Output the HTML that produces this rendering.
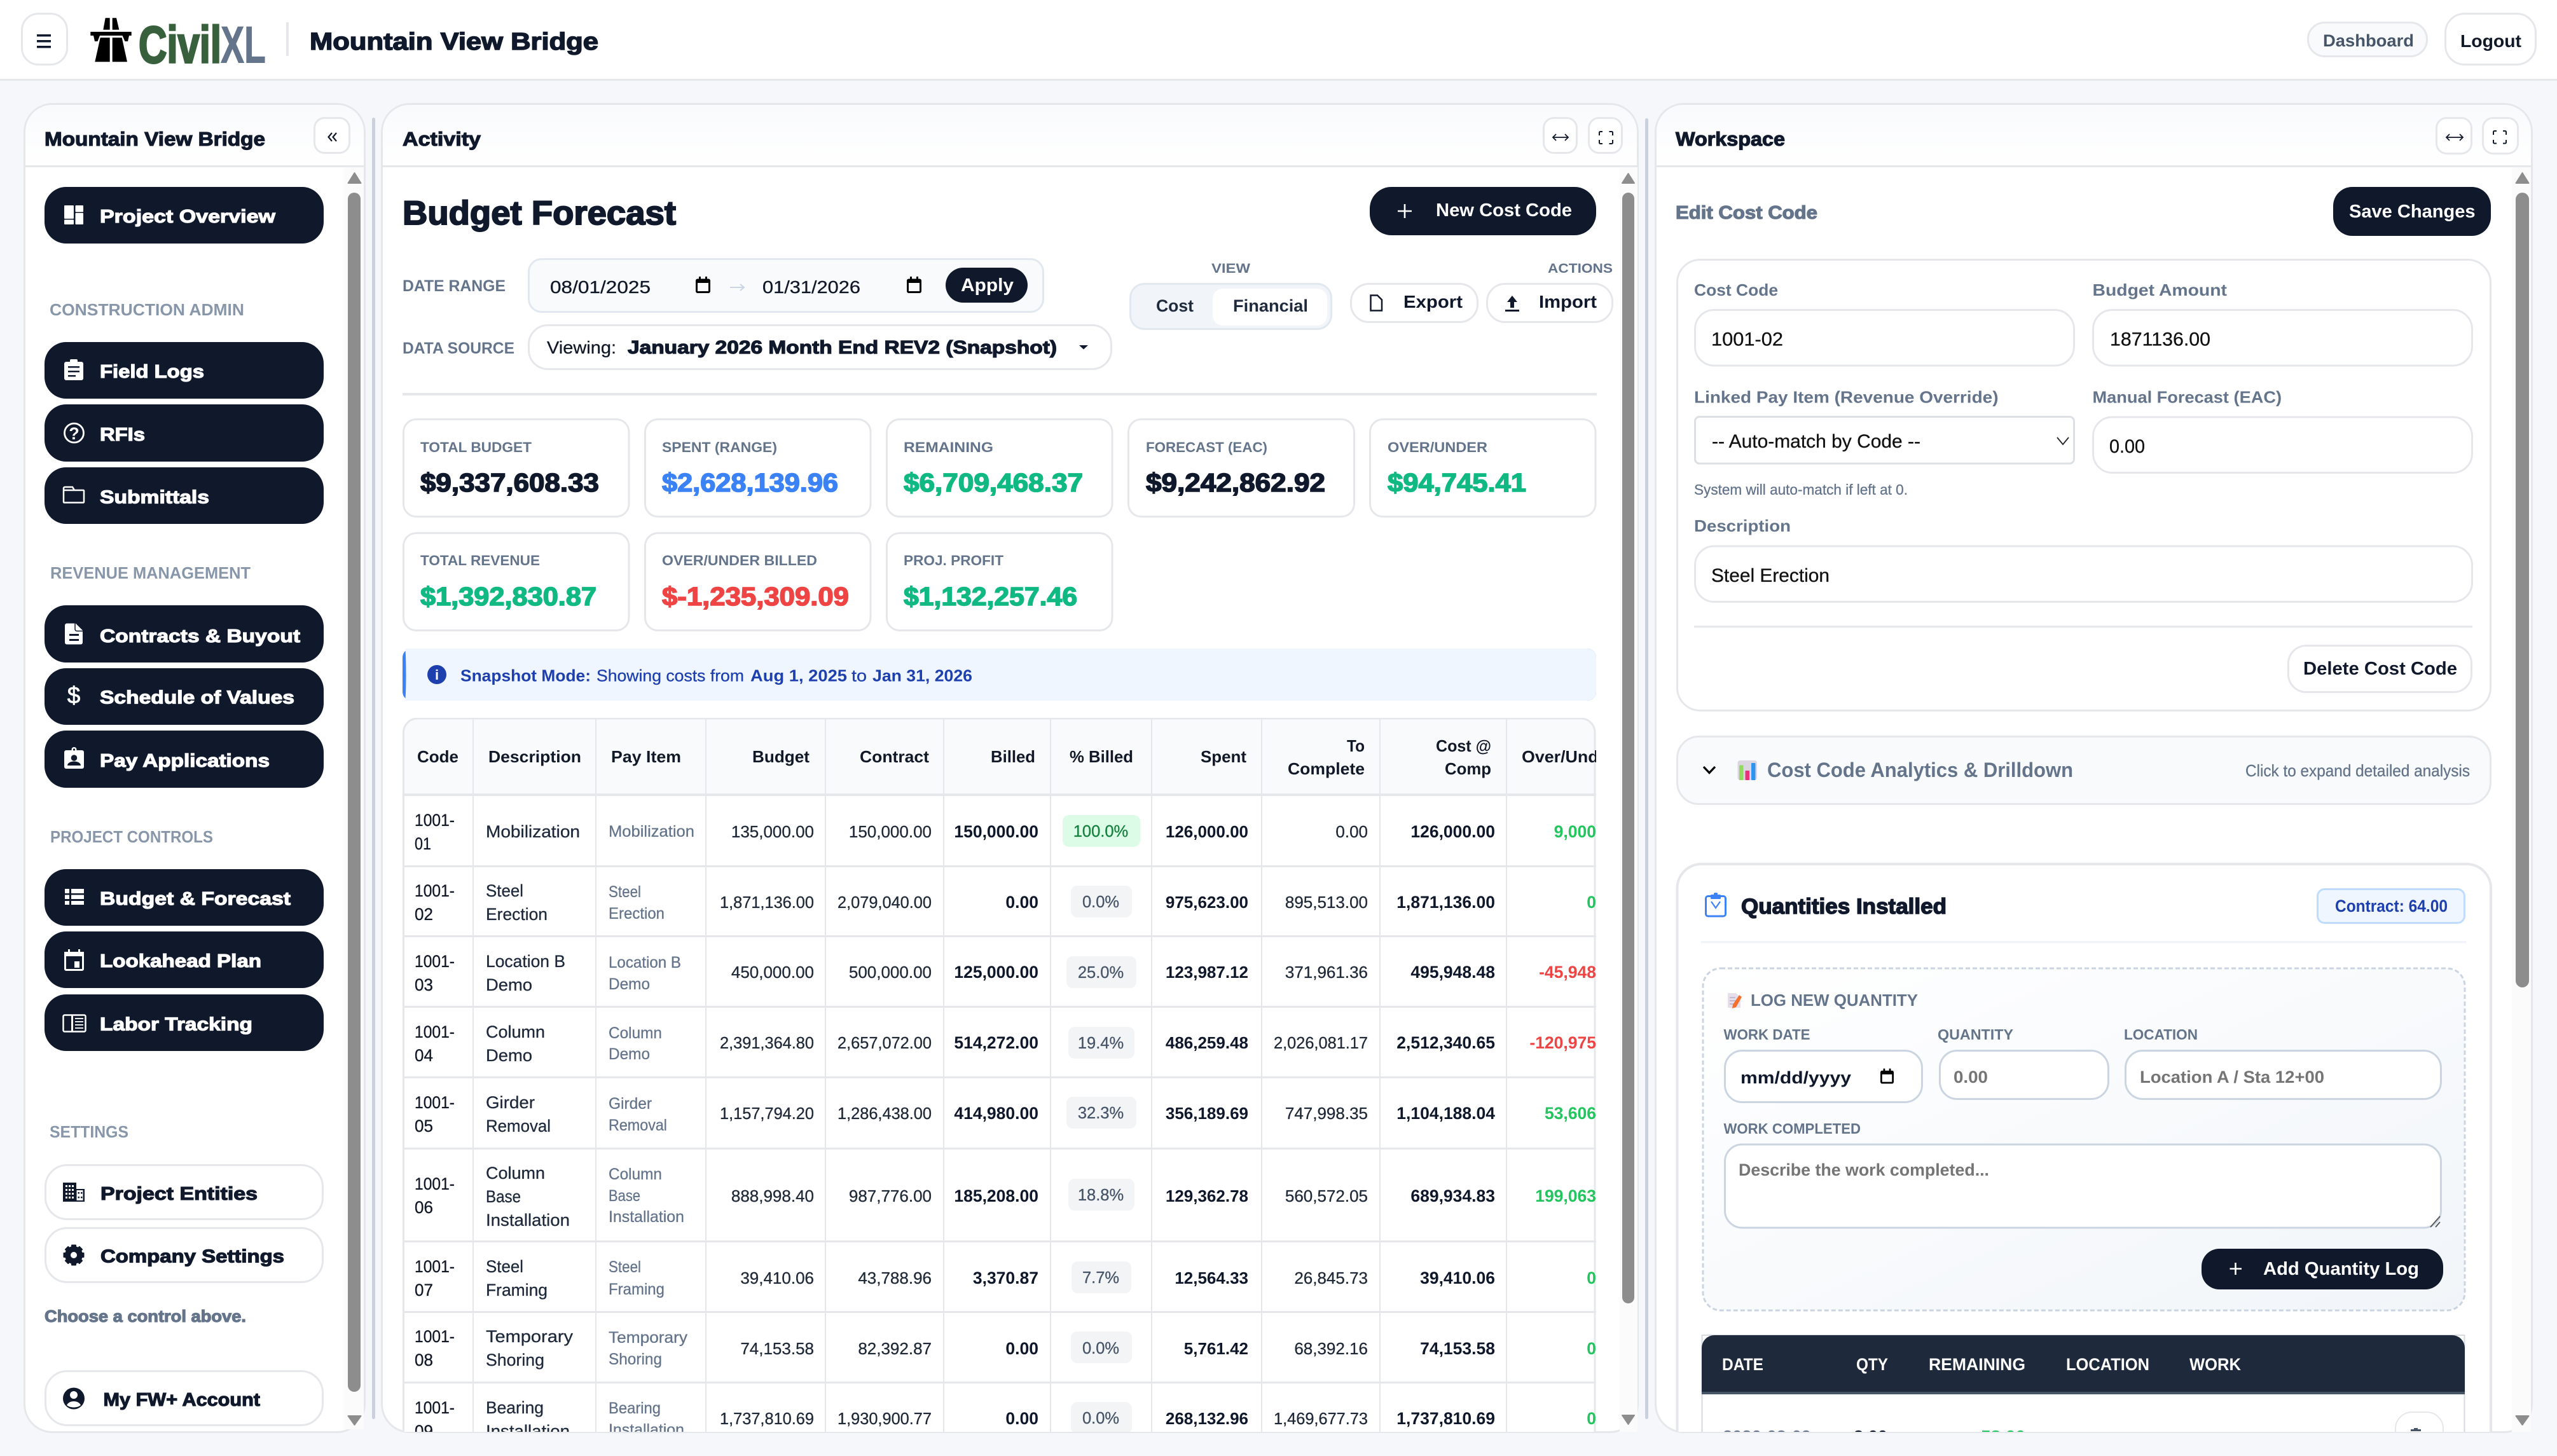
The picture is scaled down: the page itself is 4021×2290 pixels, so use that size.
<!DOCTYPE html>
<html lang="en"><head><meta charset="utf-8"><title>Mountain View Bridge - Budget Forecast</title>
<style>
html,body{margin:0;padding:0;background:#f5f7fb;width:4021px;height:2290px;overflow:hidden}
svg{display:block}
text{font-family:"Liberation Sans",sans-serif;fill:currentColor;white-space:pre}
.b{font-weight:700}
.x{font-weight:700;stroke:currentColor;stroke-width:1.2px}
.s{stroke:currentColor;stroke-width:.3px}
.l{stroke:#e5e7eb;stroke-width:3;fill:#fff}
</style></head><body>
<svg xmlns="http://www.w3.org/2000/svg" width="4021" height="2290" viewBox="0 0 4021 2290">
<defs>
<clipPath id="mid"><rect x="600" y="263" width="1977" height="1989"/></clipPath>
<clipPath id="rgt"><rect x="2602" y="263" width="1381" height="1989"/></clipPath>
<clipPath id="tbl"><rect x="633" y="1129" width="1877" height="1123"/></clipPath>
<linearGradient id="hd" x1="0" y1="0" x2="0" y2="1"><stop offset="0" stop-color="#f9fafc"/><stop offset="1" stop-color="#ffffff"/></linearGradient>
<linearGradient id="dash" x1="0" y1="0" x2="1" y2="1"><stop offset="0" stop-color="#ffffff"/><stop offset="1" stop-color="#f1f5f9"/></linearGradient>
<symbol id="cal" viewBox="0 0 23 26" overflow="visible"><rect x="1.5" y="5" width="20" height="19.5" rx="1.5" fill="none" stroke="currentColor" stroke-width="3"/><rect x="1" y="4" width="21" height="6" fill="currentColor"/><rect x="5" y="0" width="3" height="6" fill="currentColor"/><rect x="15" y="0" width="3" height="6" fill="currentColor"/></symbol>
</defs>
<rect width="4021" height="2290" fill="#f5f7fb"/>

<!-- TOP BAR -->
<rect width="4021" height="124" fill="#fff"/>
<rect y="124" width="4021" height="3" fill="#e5e7eb"/>
<rect x="34.500" y="21.500" width="71" height="80" rx="26" fill="#fff" stroke="#e5e7eb" stroke-width="3"/>
<g fill="#10182c"><rect x="58" y="54" width="22" height="3.500"/><rect x="58" y="63" width="22" height="3.500"/><rect x="58" y="72" width="22" height="3.500"/></g>
<g fill="#000">
<polygon points="165.700,28.300 172.700,28.300 172.700,46.700 162.300,46.700"/>
<polygon points="176.700,28.300 183,28.300 187.300,46.700 176.700,46.700"/>
<rect x="142.300" y="50" width="64.400" height="6"/>
<polygon points="147,56 157,56 153.500,65 149,65"/><polygon points="192.500,56 203,56 201,65 196.500,65"/>
<polygon points="157.700,59.300 172.700,59.300 172.700,97.300 149.300,97.300"/>
<polygon points="176.700,59.300 191.700,59.300 200,97.300 176.700,97.300"/>
</g>
<text x="218" y="98.500" font-size="82" textLength="130" lengthAdjust="spacingAndGlyphs" class="b" color="#38603c" style="stroke:currentColor;stroke-width:3px">Civil</text>
<text x="347" y="98.500" font-size="82" textLength="71" lengthAdjust="spacingAndGlyphs" class="b" color="#64748b" style="stroke:currentColor;stroke-width:1px">XL</text>
<rect x="450" y="35" width="4" height="53" fill="#e5e7eb"/>
<text x="487" y="78" font-size="38" textLength="454" lengthAdjust="spacingAndGlyphs" class="x" color="#10182c" style="stroke-width:1.5px">Mountain View Bridge</text>
<rect x="3629.500" y="35.500" width="187" height="53" rx="26" fill="#f8fafc" stroke="#e5e7eb" stroke-width="3"/>
<text x="3653" y="73" font-size="27" textLength="143" lengthAdjust="spacingAndGlyphs" class="b" color="#475569">Dashboard</text>
<rect x="3845.500" y="21.500" width="142" height="80" rx="30" fill="#fff" stroke="#e5e7eb" stroke-width="3"/>
<text x="3869" y="74" font-size="28" textLength="96" lengthAdjust="spacingAndGlyphs" class="b" color="#111827">Logout</text>

<!-- GUTTERS -->
<rect x="585" y="185" width="5" height="2047" rx="2.500" fill="#c9d1de"/>
<rect x="2587" y="186" width="5" height="2046" rx="2.500" fill="#c9d1de"/>

<!-- LEFT PANEL -->
<rect x="38.500" y="163.500" width="535" height="2089" rx="44" class="l"/>
<path d="M40 261V207a42 42 0 0 1 42-42H530a42 42 0 0 1 42 42V261z" fill="url(#hd)"/>
<rect x="38" y="260" width="536" height="3" fill="#e5e7eb"/>
<text x="70" y="229" font-size="31" textLength="347" lengthAdjust="spacingAndGlyphs" class="x" color="#10182c">Mountain View Bridge</text>
<rect x="494.500" y="185.500" width="55" height="55" rx="16" fill="#fff" stroke="#e5e7eb" stroke-width="3"/>
<path d="M522 209l-5.500 6.500 5.500 6.500M529 209l-5.500 6.500 5.500 6.500" fill="none" stroke="#10182c" stroke-width="2.200"/>
<rect x="541" y="263" width="31" height="1985" fill="#fbfbfb"/>
<rect x="547" y="303" width="20" height="1886" rx="10" fill="#8d8d8d"/>
<path d="M557.500 272l10 16h-20z" fill="#8d8d8d" stroke="#8d8d8d" stroke-width="2" stroke-linejoin="round"/>
<path d="M557.500 2241l10-14h-20z" fill="#8d8d8d" stroke="#8d8d8d" stroke-width="2" stroke-linejoin="round"/>

<g fill="#10182c">
<rect x="70" y="294" width="439" height="89" rx="34"/>
<rect x="70" y="538" width="439" height="89" rx="34"/>
<rect x="70" y="636" width="439" height="90" rx="34"/>
<rect x="70" y="735" width="439" height="89" rx="34"/>
<rect x="70" y="952" width="439" height="90" rx="34"/>
<rect x="70" y="1051" width="439" height="89" rx="34"/>
<rect x="70" y="1149" width="439" height="90" rx="34"/>
<rect x="70" y="1367" width="439" height="89" rx="34"/>
<rect x="70" y="1465" width="439" height="89" rx="34"/>
<rect x="70" y="1564" width="439" height="89" rx="34"/>
</g>
<g fill="#fff" stroke="#e5e7eb" stroke-width="3">
<rect x="71.500" y="1832.500" width="436" height="85" rx="34"/>
<rect x="71.500" y="1931.500" width="436" height="85" rx="34"/>
<rect x="71.500" y="2156.500" width="436" height="85" rx="34"/>
</g>

<g color="#8896a9" class="b" font-size="26">
<text x="78" y="496" textLength="306" lengthAdjust="spacingAndGlyphs">CONSTRUCTION ADMIN</text>
<text x="79" y="910" textLength="315" lengthAdjust="spacingAndGlyphs">REVENUE MANAGEMENT</text>
<text x="79" y="1325" textLength="256" lengthAdjust="spacingAndGlyphs">PROJECT CONTROLS</text>
<text x="78" y="1789" textLength="124" lengthAdjust="spacingAndGlyphs">SETTINGS</text>
</g>

<g color="#fff" class="x" font-size="29">
<text x="157" y="350" textLength="276" lengthAdjust="spacingAndGlyphs">Project Overview</text>
<text x="157" y="594" textLength="164" lengthAdjust="spacingAndGlyphs">Field Logs</text>
<text x="157" y="693" textLength="71" lengthAdjust="spacingAndGlyphs">RFIs</text>
<text x="157" y="791.500" textLength="172" lengthAdjust="spacingAndGlyphs">Submittals</text>
<text x="157" y="1010" textLength="315" lengthAdjust="spacingAndGlyphs">Contracts &amp; Buyout</text>
<text x="157" y="1106.500" textLength="306" lengthAdjust="spacingAndGlyphs">Schedule of Values</text>
<text x="157" y="1206" textLength="267" lengthAdjust="spacingAndGlyphs">Pay Applications</text>
<text x="157" y="1423" textLength="300" lengthAdjust="spacingAndGlyphs">Budget &amp; Forecast</text>
<text x="157" y="1521" textLength="254" lengthAdjust="spacingAndGlyphs">Lookahead Plan</text>
<text x="157" y="1620.500" textLength="240" lengthAdjust="spacingAndGlyphs">Labor Tracking</text>
</g>
<g color="#10182c" class="x" font-size="29">
<text x="158" y="1887" textLength="247" lengthAdjust="spacingAndGlyphs">Project Entities</text>
<text x="158" y="1985.500" textLength="289" lengthAdjust="spacingAndGlyphs">Company Settings</text>
<text x="162.500" y="2211" textLength="246.500" lengthAdjust="spacingAndGlyphs">My FW+ Account</text>
</g>
<text x="70" y="2079" font-size="26" textLength="317" lengthAdjust="spacingAndGlyphs" class="x" color="#64748b">Choose a control above.</text>

<!-- sidebar icons -->
<g fill="#fff">
<rect x="101" y="323" width="15" height="21" rx="1"/><rect x="118.500" y="323" width="12.500" height="10.500" rx="1"/><rect x="101" y="345.500" width="15" height="7.500" rx="1"/><rect x="118.500" y="335" width="12.500" height="18" rx="1"/>
<rect x="101" y="569" width="30" height="29" rx="3"/><rect x="110" y="565" width="12" height="6" rx="2"/>
<rect x="107" y="576" width="18" height="2.500" fill="#10182c"/><rect x="107" y="583" width="18" height="2.500" fill="#10182c"/><rect x="107" y="590" width="12" height="2.500" fill="#10182c"/>
</g>
<circle cx="116.500" cy="681" r="15" fill="none" stroke="#fff" stroke-width="2.800"/>
<text x="116.500" y="691" font-size="27" text-anchor="middle" class="b" color="#fff">?</text>
<path d="M101 790.500h30a1 1 0 0 0 1-1V772a1 1 0 0 0-1-1H117l-3-5H102a2 2 0 0 0-2 2v21.500a1 1 0 0 0 1 1zM100 771h18" fill="none" stroke="#fff" stroke-width="2.500"/>
<path d="M105 980.500h14l11 11v19a3 3 0 0 1-3 3H105a3 3 0 0 1-3-3v-27a3 3 0 0 1 3-3z" fill="#fff"/>
<path d="M118 980.500v9a3 3 0 0 0 3 3h9" fill="none" stroke="#10182c" stroke-width="1.500"/>
<rect x="109" y="997" width="15" height="3" fill="#10182c"/><rect x="109" y="1005" width="15" height="3" fill="#10182c"/>
<text x="116" y="1106" font-size="37" text-anchor="middle" color="#fff" style="stroke:currentColor;stroke-width:.7px">$</text>
<rect x="101" y="1180" width="31" height="29" rx="3" fill="#fff"/><circle cx="116.500" cy="1179" r="4" fill="#fff"/><circle cx="116.500" cy="1179" r="1.600" fill="#10182c"/>
<circle cx="116.500" cy="1192" r="4.800" fill="#10182c"/><path d="M106 1204c0-4 5-6.500 10.500-6.500s10.500 2.500 10.500 6.500z" fill="#10182c"/>
<g fill="#fff">
<rect x="102" y="1398" width="7" height="7"/><rect x="112" y="1398" width="20" height="7"/><rect x="102" y="1407.500" width="7" height="6.500"/><rect x="112" y="1407.500" width="20" height="6.500"/><rect x="102" y="1417" width="7" height="6"/><rect x="112" y="1417" width="20" height="6"/>
<rect x="101" y="1497" width="31" height="7"/><rect x="107" y="1493" width="3" height="6"/><rect x="123" y="1493" width="3" height="6"/><rect x="117" y="1512" width="8" height="10"/>
</g>
<rect x="102.500" y="1498.500" width="28" height="27" rx="1.500" fill="none" stroke="#fff" stroke-width="3"/>
<rect x="99.500" y="1596.500" width="35" height="26" rx="2" fill="none" stroke="#fff" stroke-width="2.500"/>
<rect x="112" y="1597" width="3" height="25" fill="#fff"/>
<g fill="#fff"><rect x="118" y="1601" width="13" height="1.800"/><rect x="118" y="1606" width="13" height="1.800"/><rect x="118" y="1611" width="13" height="1.800"/><rect x="118" y="1616" width="13" height="1.800"/></g>
<path d="M99 1860h21v10h13v20H99z" fill="#10182c"/>
<g fill="#fff"><rect x="103" y="1864" width="3" height="3"/><rect x="108" y="1864" width="3" height="3"/><rect x="113" y="1864" width="3" height="3"/><rect x="103" y="1870" width="3" height="3"/><rect x="108" y="1870" width="3" height="3"/><rect x="113" y="1870" width="3" height="3"/><rect x="103" y="1876" width="3" height="3"/><rect x="108" y="1876" width="3" height="3"/><rect x="113" y="1876" width="3" height="3"/><rect x="103" y="1882" width="3" height="3"/><rect x="108" y="1882" width="3" height="3"/><rect x="113" y="1882" width="3" height="3"/><rect x="120.500" y="1872" width="10" height="16"/></g>
<g fill="#10182c"><rect x="122.500" y="1875" width="2.500" height="2.500"/><rect x="127" y="1875" width="2.500" height="2.500"/><rect x="122.500" y="1882" width="2.500" height="2.500"/><rect x="127" y="1882" width="2.500" height="2.500"/></g>
<g transform="translate(116 1974)" fill="#10182c">
<circle r="9.500" fill="none" stroke="#10182c" stroke-width="9"/>
<rect x="-4" y="-16.500" width="8" height="6" rx="1"/><rect x="-4" y="-16.500" width="8" height="6" rx="1" transform="rotate(45)"/><rect x="-4" y="-16.500" width="8" height="6" rx="1" transform="rotate(90)"/><rect x="-4" y="-16.500" width="8" height="6" rx="1" transform="rotate(135)"/><rect x="-4" y="-16.500" width="8" height="6" rx="1" transform="rotate(180)"/><rect x="-4" y="-16.500" width="8" height="6" rx="1" transform="rotate(225)"/><rect x="-4" y="-16.500" width="8" height="6" rx="1" transform="rotate(270)"/><rect x="-4" y="-16.500" width="8" height="6" rx="1" transform="rotate(315)"/>
</g>
<circle cx="116" cy="2199.500" r="17" fill="#10182c"/><circle cx="116" cy="2194" r="6" fill="#fff"/><path d="M105 2210c2-4 6-6 11-6s9 2 11 6c-3 2.500-7 3.500-11 3.500s-8-1-11-3.500z" fill="#fff"/>

<!-- MIDDLE PANEL -->
<rect x="600.500" y="163.500" width="1975" height="2089" rx="44" class="l"/>
<path d="M602 261V207a42 42 0 0 1 42-42H2532a42 42 0 0 1 42 42V261z" fill="url(#hd)"/>
<rect x="600" y="260" width="1976" height="3" fill="#e5e7eb"/>
<text x="633" y="229" font-size="31" textLength="123" lengthAdjust="spacingAndGlyphs" class="x" color="#10182c">Activity</text>
<rect x="2427.500" y="185.500" width="52" height="55" rx="16" fill="#fff" stroke="#e5e7eb" stroke-width="3"/>
<rect x="2498.500" y="185.500" width="52" height="55" rx="16" fill="#fff" stroke="#e5e7eb" stroke-width="3"/>
<path d="M2442.500 216h23M2447 211l-5 5 5 5M2461 211l5 5-5 5" fill="none" stroke="#10182c" stroke-width="1.800"/>
<path d="M2515 213v-4.500a1.500 1.500 0 0 1 1.500-1.500H2520M2530.500 207h4a1.500 1.500 0 0 1 1.500 1.500V213M2536 220v4.500a1.500 1.500 0 0 1-1.500 1.500H2530.500M2520 226h-3.500a1.500 1.500 0 0 1-1.500-1.500V220" fill="none" stroke="#10182c" stroke-width="2"/>

<g clip-path="url(#mid)">
<rect x="2547" y="263" width="28" height="1990" fill="#fbfbfb"/>
<rect x="2551" y="303" width="19" height="1747" rx="9.500" fill="#8d8d8d"/>
<path d="M2560.500 273l9.500 15h-19z" fill="#8d8d8d" stroke="#8d8d8d" stroke-width="2" stroke-linejoin="round"/>
<path d="M2560.500 2240l9.500-14h-19z" fill="#8d8d8d" stroke="#8d8d8d" stroke-width="2" stroke-linejoin="round"/>

<text x="633" y="353" font-size="53" textLength="430" lengthAdjust="spacingAndGlyphs" class="x" color="#10182c" style="stroke-width:2px">Budget Forecast</text>
<rect x="2154" y="294" width="356" height="76" rx="34" fill="#10182c"/>
<path d="M2198 332h22M2209 321v22" stroke="#fff" stroke-width="2.600"/>
<text x="2258" y="340" font-size="29" textLength="214" lengthAdjust="spacingAndGlyphs" class="b" color="#fff">New Cost Code</text>

<g class="b" color="#64748b" font-size="25">
<text x="633" y="458" textLength="162" lengthAdjust="spacingAndGlyphs">DATE RANGE</text>
<text x="633" y="556" textLength="176" lengthAdjust="spacingAndGlyphs">DATA SOURCE</text>
</g>
<rect x="831.500" y="407.500" width="809" height="83" rx="20" fill="#f8fafc" stroke="#e2e8f0" stroke-width="3"/>
<text x="865" y="461" font-size="28" textLength="158" lengthAdjust="spacingAndGlyphs" color="#111827" class="s">08/01/2025</text>
<use href="#cal" x="1094" y="435" width="23" height="26" color="#000"/>
<path d="M1148 452h22M1164 447l6 5-6 5" fill="none" stroke="#cbd5e1" stroke-width="2"/>
<text x="1199" y="461" font-size="28" textLength="154" lengthAdjust="spacingAndGlyphs" color="#111827" class="s">01/31/2026</text>
<use href="#cal" x="1426" y="435" width="23" height="26" color="#000"/>
<rect x="1487" y="421" width="129" height="55" rx="27.500" fill="#10182c"/>
<text x="1511" y="458" font-size="29" textLength="83" lengthAdjust="spacingAndGlyphs" class="b" color="#fff">Apply</text>

<rect x="831.500" y="511.500" width="916" height="69" rx="30" fill="#fff" stroke="#e5e7eb" stroke-width="3"/>
<text x="860" y="556" font-size="28" textLength="109" lengthAdjust="spacingAndGlyphs" color="#111827" class="s">Viewing:</text>
<text x="987" y="556" font-size="29" textLength="675" lengthAdjust="spacingAndGlyphs" class="x" color="#10182c">January 2026 Month End REV2 (Snapshot)</text>
<path d="M1697 543h14l-7 6.500z" fill="#10182c"/>

<g class="b" color="#64748b" font-size="21">
<text x="1905" y="429" textLength="61" lengthAdjust="spacingAndGlyphs">VIEW</text>
<text x="2434" y="429" textLength="102" lengthAdjust="spacingAndGlyphs">ACTIONS</text>
</g>
<rect x="1777.500" y="446.500" width="316" height="71" rx="22" fill="#f1f5f9" stroke="#e2e8f0" stroke-width="3"/>
<rect x="1907" y="454" width="180" height="58" rx="16" fill="#fff"/>
<g class="b" color="#1f2a3d" font-size="27">
<text x="1818" y="490" textLength="59" lengthAdjust="spacingAndGlyphs">Cost</text>
<text x="1939" y="490" textLength="118" lengthAdjust="spacingAndGlyphs">Financial</text>
</g>
<rect x="2124.500" y="446.500" width="199" height="60" rx="28" fill="#fff" stroke="#e5e7eb" stroke-width="3"/>
<rect x="2338.500" y="446.500" width="197" height="60" rx="28" fill="#fff" stroke="#e5e7eb" stroke-width="3"/>
<path d="M2155.500 464.500h10.500l7 7v17h-17.500z" fill="none" stroke="#10182c" stroke-width="2.500"/>
<path d="M2378 465l8 10h-5v9h-6v-9h-5zM2367 487h22v3h-22z" fill="#10182c"/>
<g class="b" color="#10182c" font-size="28">
<text x="2207" y="484" textLength="93" lengthAdjust="spacingAndGlyphs">Export</text>
<text x="2420" y="484" textLength="91" lengthAdjust="spacingAndGlyphs">Import</text>
</g>
<rect x="633" y="618" width="1878" height="4" fill="#e5e7eb"/>

<!-- KPI cards -->
<g fill="#fff" stroke="#e5e7eb" stroke-width="3">
<rect x="634.500" y="659.500" width="354.500" height="153" rx="20"/><rect x="1014.500" y="659.500" width="354.500" height="153" rx="20"/><rect x="1394.500" y="659.500" width="354.500" height="153" rx="20"/><rect x="1774.500" y="659.500" width="355" height="153" rx="20"/><rect x="2154.500" y="659.500" width="354.500" height="153" rx="20"/>
<rect x="634.500" y="838.500" width="354.500" height="153" rx="20"/><rect x="1014.500" y="838.500" width="354.500" height="153" rx="20"/><rect x="1394.500" y="838.500" width="354.500" height="153" rx="20"/>
</g>
<g class="b" color="#64748b" font-size="22">
<text x="661" y="711" textLength="175" lengthAdjust="spacingAndGlyphs">TOTAL BUDGET</text>
<text x="1041" y="711" textLength="181" lengthAdjust="spacingAndGlyphs">SPENT (RANGE)</text>
<text x="1421" y="711" textLength="141" lengthAdjust="spacingAndGlyphs">REMAINING</text>
<text x="1802" y="711" textLength="191" lengthAdjust="spacingAndGlyphs">FORECAST (EAC)</text>
<text x="2182" y="711" textLength="157" lengthAdjust="spacingAndGlyphs">OVER/UNDER</text>
<text x="661" y="889" textLength="188" lengthAdjust="spacingAndGlyphs">TOTAL REVENUE</text>
<text x="1041" y="889" textLength="244" lengthAdjust="spacingAndGlyphs">OVER/UNDER BILLED</text>
<text x="1421" y="889" textLength="157" lengthAdjust="spacingAndGlyphs">PROJ. PROFIT</text>
</g>
<g class="x" font-size="41" style="stroke-width:1.600px">
<text x="661" y="773" textLength="281" lengthAdjust="spacingAndGlyphs" color="#10182c">$9,337,608.33</text>
<text x="1041" y="773" textLength="277" lengthAdjust="spacingAndGlyphs" color="#3b82f6">$2,628,139.96</text>
<text x="1421" y="773" textLength="282" lengthAdjust="spacingAndGlyphs" color="#10b981">$6,709,468.37</text>
<text x="1802" y="773" textLength="282" lengthAdjust="spacingAndGlyphs" color="#10182c">$9,242,862.92</text>
<text x="2182" y="773" textLength="218" lengthAdjust="spacingAndGlyphs" color="#10b981">$94,745.41</text>
<text x="661" y="952" textLength="277" lengthAdjust="spacingAndGlyphs" color="#10b981">$1,392,830.87</text>
<text x="1041" y="952" textLength="294" lengthAdjust="spacingAndGlyphs" color="#ef4444">$-1,235,309.09</text>
<text x="1421" y="952" textLength="273" lengthAdjust="spacingAndGlyphs" color="#10b981">$1,132,257.46</text>
</g>

<!-- Banner -->
<rect x="633" y="1020" width="1877" height="82" rx="14" fill="#3b82f6"/>
<path d="M637 1020H2496a14 14 0 0 1 14 14v54a14 14 0 0 1-14 14H637c2-6 2-76 0-82z" fill="#eff6ff"/>
<circle cx="687" cy="1061" r="15" fill="#1e40af"/>
<text x="687" y="1069" font-size="22" text-anchor="middle" class="b" color="#fff">i</text>
<g color="#1e40af" font-size="26">
<text x="724" y="1071.500" textLength="205" lengthAdjust="spacingAndGlyphs" class="b">Snapshot Mode:</text>
<text x="938" y="1071.500" textLength="232" lengthAdjust="spacingAndGlyphs" class="s">Showing costs from</text>
<text x="1180" y="1071.500" textLength="152" lengthAdjust="spacingAndGlyphs" class="b">Aug 1, 2025</text>
<text x="1339" y="1071.500" textLength="24" lengthAdjust="spacingAndGlyphs" class="s">to</text>
<text x="1372" y="1071.500" textLength="157" lengthAdjust="spacingAndGlyphs" class="b">Jan 31, 2026</text>
</g>

<!-- TABLE -->
<g clip-path="url(#tbl)">
<path d="M634.500 2300V1152a22 22 0 0 1 22-22H2486a22 22 0 0 1 22 22V2300z" fill="#fff"/>
<path d="M634.500 1248V1152a22 22 0 0 1 22-22H2486a22 22 0 0 1 22 22V1248z" fill="#f8fafc"/>
<path d="M634.500 2300V1152a22 22 0 0 1 22-22H2486a22 22 0 0 1 22 22V2300" fill="none" stroke="#e5e7eb" stroke-width="3"/>
<g fill="#e5e7eb">
<rect x="743" y="1130" width="2" height="1130"/><rect x="936" y="1130" width="2" height="1130"/><rect x="1109" y="1130" width="2" height="1130"/><rect x="1297" y="1130" width="2" height="1130"/><rect x="1483" y="1130" width="2" height="1130"/><rect x="1651" y="1130" width="2" height="1130"/><rect x="1810" y="1130" width="2" height="1130"/><rect x="1983" y="1130" width="2" height="1130"/><rect x="2169" y="1130" width="2" height="1130"/><rect x="2368" y="1130" width="2" height="1130"/>
<rect x="634" y="1248" width="1876" height="4"/>
<rect x="634" y="1361" width="1876" height="3"/><rect x="634" y="1471" width="1876" height="3"/><rect x="634" y="1582" width="1876" height="3"/><rect x="634" y="1693" width="1876" height="3"/><rect x="634" y="1805" width="1876" height="3"/><rect x="634" y="1951" width="1876" height="3"/><rect x="634" y="2062" width="1876" height="3"/><rect x="634" y="2173" width="1876" height="3"/>
</g>
<g class="b" color="#111827" font-size="26">
<text x="656" y="1199" textLength="65" lengthAdjust="spacingAndGlyphs">Code</text>
<text x="768" y="1199" textLength="146" lengthAdjust="spacingAndGlyphs">Description</text>
<text x="961" y="1199" textLength="110" lengthAdjust="spacingAndGlyphs">Pay Item</text>
<text x="1183" y="1199" textLength="90" lengthAdjust="spacingAndGlyphs">Budget</text>
<text x="1352" y="1199" textLength="109" lengthAdjust="spacingAndGlyphs">Contract</text>
<text x="1558" y="1199" textLength="70" lengthAdjust="spacingAndGlyphs">Billed</text>
<text x="1682" y="1199" textLength="100" lengthAdjust="spacingAndGlyphs">% Billed</text>
<text x="1888" y="1199" textLength="72" lengthAdjust="spacingAndGlyphs">Spent</text>
<text x="2118" y="1182" textLength="28" lengthAdjust="spacingAndGlyphs">To</text>
<text x="2025" y="1218" textLength="121" lengthAdjust="spacingAndGlyphs">Complete</text>
<text x="2258" y="1182" textLength="87" lengthAdjust="spacingAndGlyphs">Cost @</text>
<text x="2272" y="1218" textLength="73" lengthAdjust="spacingAndGlyphs">Comp</text>
<text x="2393" y="1199" textLength="146" lengthAdjust="spacingAndGlyphs">Over/Under</text>
</g>

<!-- code column -->
<g font-size="27" color="#111827" class="s">
<text x="652" y="1299" textLength="63" lengthAdjust="spacingAndGlyphs">1001-</text><text x="652" y="1336" textLength="26" lengthAdjust="spacingAndGlyphs">01</text>
<text x="652" y="1410" textLength="63" lengthAdjust="spacingAndGlyphs">1001-</text><text x="652" y="1447" textLength="29" lengthAdjust="spacingAndGlyphs">02</text>
<text x="652" y="1521" textLength="63" lengthAdjust="spacingAndGlyphs">1001-</text><text x="652" y="1558" textLength="29" lengthAdjust="spacingAndGlyphs">03</text>
<text x="652" y="1632" textLength="63" lengthAdjust="spacingAndGlyphs">1001-</text><text x="652" y="1669" textLength="29" lengthAdjust="spacingAndGlyphs">04</text>
<text x="652" y="1743" textLength="63" lengthAdjust="spacingAndGlyphs">1001-</text><text x="652" y="1780" textLength="29" lengthAdjust="spacingAndGlyphs">05</text>
<text x="652" y="1871" textLength="63" lengthAdjust="spacingAndGlyphs">1001-</text><text x="652" y="1908" textLength="29" lengthAdjust="spacingAndGlyphs">06</text>
<text x="652" y="2001" textLength="63" lengthAdjust="spacingAndGlyphs">1001-</text><text x="652" y="2038" textLength="29" lengthAdjust="spacingAndGlyphs">07</text>
<text x="652" y="2111" textLength="63" lengthAdjust="spacingAndGlyphs">1001-</text><text x="652" y="2148" textLength="29" lengthAdjust="spacingAndGlyphs">08</text>
<text x="652" y="2223" textLength="63" lengthAdjust="spacingAndGlyphs">1001-</text><text x="652" y="2260" textLength="29" lengthAdjust="spacingAndGlyphs">09</text>
</g>
<!-- description -->
<g font-size="27" color="#1e293b" class="s" transform="translate(1 0)">
<text x="763" y="1317" textLength="148" lengthAdjust="spacingAndGlyphs">Mobilization</text>
<text x="763" y="1410" textLength="59" lengthAdjust="spacingAndGlyphs">Steel</text><text x="763" y="1447" textLength="97" lengthAdjust="spacingAndGlyphs">Erection</text>
<text x="763" y="1521" textLength="125" lengthAdjust="spacingAndGlyphs">Location B</text><text x="763" y="1558" textLength="73" lengthAdjust="spacingAndGlyphs">Demo</text>
<text x="763" y="1632" textLength="93" lengthAdjust="spacingAndGlyphs">Column</text><text x="763" y="1669" textLength="73" lengthAdjust="spacingAndGlyphs">Demo</text>
<text x="763" y="1743" textLength="77" lengthAdjust="spacingAndGlyphs">Girder</text><text x="763" y="1780" textLength="102" lengthAdjust="spacingAndGlyphs">Removal</text>
<text x="763" y="1854" textLength="93" lengthAdjust="spacingAndGlyphs">Column</text><text x="763" y="1891" textLength="55" lengthAdjust="spacingAndGlyphs">Base</text><text x="763" y="1928" textLength="132" lengthAdjust="spacingAndGlyphs">Installation</text>
<text x="763" y="2001" textLength="59" lengthAdjust="spacingAndGlyphs">Steel</text><text x="763" y="2038" textLength="97" lengthAdjust="spacingAndGlyphs">Framing</text>
<text x="763" y="2111" textLength="137" lengthAdjust="spacingAndGlyphs">Temporary</text><text x="763" y="2148" textLength="92" lengthAdjust="spacingAndGlyphs">Shoring</text>
<text x="763" y="2223" textLength="91" lengthAdjust="spacingAndGlyphs">Bearing</text><text x="763" y="2260" textLength="132" lengthAdjust="spacingAndGlyphs">Installation</text>
</g>
<!-- pay item -->
<g font-size="25" color="#64748b" class="s">
<text x="957" y="1316" textLength="135" lengthAdjust="spacingAndGlyphs">Mobilization</text>
<text x="957" y="1411" textLength="51" lengthAdjust="spacingAndGlyphs">Steel</text><text x="957" y="1445" textLength="88" lengthAdjust="spacingAndGlyphs">Erection</text>
<text x="957" y="1522" textLength="114" lengthAdjust="spacingAndGlyphs">Location B</text><text x="957" y="1556" textLength="65" lengthAdjust="spacingAndGlyphs">Demo</text>
<text x="957" y="1633" textLength="84" lengthAdjust="spacingAndGlyphs">Column</text><text x="957" y="1666" textLength="65" lengthAdjust="spacingAndGlyphs">Demo</text>
<text x="957" y="1744" textLength="68" lengthAdjust="spacingAndGlyphs">Girder</text><text x="957" y="1778" textLength="92" lengthAdjust="spacingAndGlyphs">Removal</text>
<text x="957" y="1855" textLength="84" lengthAdjust="spacingAndGlyphs">Column</text><text x="957" y="1889" textLength="50" lengthAdjust="spacingAndGlyphs">Base</text><text x="957" y="1922" textLength="119" lengthAdjust="spacingAndGlyphs">Installation</text>
<text x="957" y="2001" textLength="51" lengthAdjust="spacingAndGlyphs">Steel</text><text x="957" y="2036" textLength="88" lengthAdjust="spacingAndGlyphs">Framing</text>
<text x="957" y="2112" textLength="124" lengthAdjust="spacingAndGlyphs">Temporary</text><text x="957" y="2146" textLength="84" lengthAdjust="spacingAndGlyphs">Shoring</text>
<text x="957" y="2223" textLength="82" lengthAdjust="spacingAndGlyphs">Bearing</text><text x="957" y="2257" textLength="119" lengthAdjust="spacingAndGlyphs">Installation</text>
</g>
<!-- regular numeric columns -->
<g font-size="26" color="#1f2937" text-anchor="end" class="s">
<text x="1280" y="1317">135,000.00</text><text x="1465" y="1317">150,000.00</text><text x="2151" y="1317">0.00</text>
<text x="1280" y="1428" textLength="148" lengthAdjust="spacingAndGlyphs">1,871,136.00</text><text x="1465" y="1428" textLength="148" lengthAdjust="spacingAndGlyphs">2,079,040.00</text><text x="2151" y="1428">895,513.00</text>
<text x="1280" y="1538">450,000.00</text><text x="1465" y="1538">500,000.00</text><text x="2151" y="1538">371,961.36</text>
<text x="1280" y="1649" textLength="148" lengthAdjust="spacingAndGlyphs">2,391,364.80</text><text x="1465" y="1649" textLength="148" lengthAdjust="spacingAndGlyphs">2,657,072.00</text><text x="2151" y="1649" textLength="148" lengthAdjust="spacingAndGlyphs">2,026,081.17</text>
<text x="1280" y="1760" textLength="148" lengthAdjust="spacingAndGlyphs">1,157,794.20</text><text x="1465" y="1760" textLength="148" lengthAdjust="spacingAndGlyphs">1,286,438.00</text><text x="2151" y="1760">747,998.35</text>
<text x="1280" y="1890">888,998.40</text><text x="1465" y="1890">987,776.00</text><text x="2151" y="1890">560,572.05</text>
<text x="1280" y="2019">39,410.06</text><text x="1465" y="2019">43,788.96</text><text x="2151" y="2019">26,845.73</text>
<text x="1280" y="2130">74,153.58</text><text x="1465" y="2130">82,392.87</text><text x="2151" y="2130">68,392.16</text>
<text x="1280" y="2240" textLength="148" lengthAdjust="spacingAndGlyphs">1,737,810.69</text><text x="1465" y="2240" textLength="148" lengthAdjust="spacingAndGlyphs">1,930,900.77</text><text x="2151" y="2240" textLength="148" lengthAdjust="spacingAndGlyphs">1,469,677.73</text>
</g>
<!-- bold numeric columns -->
<g font-size="26.500" class="b" color="#0f172a" text-anchor="end">
<text x="1633" y="1317">150,000.00</text><text x="1963" y="1317" font-size="26">126,000.00</text><text x="2351" y="1317">126,000.00</text>
<text x="1633" y="1428">0.00</text><text x="1963" y="1428" font-size="26">975,623.00</text><text x="2351" y="1428">1,871,136.00</text>
<text x="1633" y="1538">125,000.00</text><text x="1963" y="1538" font-size="26">123,987.12</text><text x="2351" y="1538">495,948.48</text>
<text x="1633" y="1649">514,272.00</text><text x="1963" y="1649" font-size="26">486,259.48</text><text x="2351" y="1649">2,512,340.65</text>
<text x="1633" y="1760">414,980.00</text><text x="1963" y="1760" font-size="26">356,189.69</text><text x="2351" y="1760">1,104,188.04</text>
<text x="1633" y="1890">185,208.00</text><text x="1963" y="1890" font-size="26">129,362.78</text><text x="2351" y="1890">689,934.83</text>
<text x="1633" y="2019">3,370.87</text><text x="1963" y="2019" font-size="26">12,564.33</text><text x="2351" y="2019">39,410.06</text>
<text x="1633" y="2130">0.00</text><text x="1963" y="2130" font-size="26">5,761.42</text><text x="2351" y="2130">74,153.58</text>
<text x="1633" y="2240">0.00</text><text x="1963" y="2240" font-size="26">268,132.96</text><text x="2351" y="2240">1,737,810.69</text>
</g>
<!-- over/under -->
<g font-size="26.500" class="b" text-anchor="end">
<g color="#22c55e"><text x="2510" y="1317">9,000</text><text x="2510" y="1428">0</text><text x="2510" y="1760">53,606</text><text x="2510" y="1890">199,063</text><text x="2510" y="2019">0</text><text x="2510" y="2130">0</text><text x="2510" y="2240">0</text></g>
<g color="#ef4444"><text x="2510" y="1538">-45,948</text><text x="2510" y="1649">-120,975</text></g>
</g>
<!-- pills -->
<rect x="1671" y="1282" width="122" height="50" rx="10" fill="#dcfce7"/>
<g fill="#f3f4f6">
<rect x="1684" y="1393" width="96" height="50" rx="10"/><rect x="1677" y="1504" width="110" height="50" rx="10"/><rect x="1680" y="1615" width="104" height="50" rx="10"/><rect x="1677" y="1725" width="110" height="50" rx="10"/><rect x="1680" y="1854" width="104" height="50" rx="10"/><rect x="1685" y="1984" width="94" height="50" rx="10"/><rect x="1684" y="2094" width="96" height="50" rx="10"/><rect x="1684" y="2205" width="96" height="50" rx="10"/>
</g>
<g font-size="25.500" text-anchor="middle" color="#475569" class="s">
<text x="1731" y="1316" color="#15803d">100.0%</text>
<text x="1731" y="1427">0.0%</text><text x="1731" y="1538">25.0%</text><text x="1731" y="1649">19.4%</text><text x="1731" y="1759">32.3%</text><text x="1731" y="1888">18.8%</text><text x="1731" y="2018">7.7%</text><text x="1731" y="2129">0.0%</text><text x="1731" y="2239">0.0%</text>
</g>
</g>
</g>

<!-- RIGHT PANEL -->
<rect x="2603.500" y="163.500" width="1378" height="2089" rx="44" class="l"/>
<path d="M2605 261V207a42 42 0 0 1 42-42H3938a42 42 0 0 1 42 42V261z" fill="url(#hd)"/>
<rect x="2603" y="260" width="1379" height="3" fill="#e5e7eb"/>
<text x="2635" y="229" font-size="31" textLength="172" lengthAdjust="spacingAndGlyphs" class="x" color="#10182c">Workspace</text>
<rect x="3831.500" y="185.500" width="55" height="56" rx="16" fill="#fff" stroke="#e5e7eb" stroke-width="3"/>
<rect x="3904.500" y="185.500" width="55" height="56" rx="16" fill="#fff" stroke="#e5e7eb" stroke-width="3"/>
<path d="M3847 216h26M3852 211l-5 5 5 5M3868 211l5 5-5 5" fill="none" stroke="#10182c" stroke-width="1.800"/>
<path d="M3921 212v-4.500a1.500 1.500 0 0 1 1.500-1.500H3926M3936 206h3.500a1.500 1.500 0 0 1 1.500 1.500V212M3941 220v4a1.500 1.500 0 0 1-1.500 1.500H3936M3926 225.500h-3.500a1.500 1.500 0 0 1-1.500-1.500V220" fill="none" stroke="#10182c" stroke-width="2"/>

<g clip-path="url(#rgt)">
<rect x="3950" y="263" width="30" height="1990" fill="#fbfbfb"/>
<rect x="3956" y="303" width="21" height="1250" rx="10.500" fill="#8d8d8d"/>
<path d="M3966.500 272l10 16h-20z" fill="#8d8d8d" stroke="#8d8d8d" stroke-width="2" stroke-linejoin="round"/>
<path d="M3966.500 2241l10-14h-20z" fill="#8d8d8d" stroke="#8d8d8d" stroke-width="2" stroke-linejoin="round"/>

<text x="2635" y="344" font-size="29" textLength="223" lengthAdjust="spacingAndGlyphs" class="x" color="#64748b">Edit Cost Code</text>
<rect x="3669" y="294" width="248" height="77" rx="30" fill="#10182c"/>
<text x="3694" y="342" font-size="29" textLength="198.500" lengthAdjust="spacingAndGlyphs" class="b" color="#fff">Save Changes</text>

<rect x="2637.500" y="408.500" width="1279" height="709" rx="36" fill="#fff" stroke="#e5e7eb" stroke-width="3"/>
<g class="b" color="#64748b" font-size="26">
<text x="2664" y="465" textLength="132" lengthAdjust="spacingAndGlyphs">Cost Code</text>
<text x="3290.500" y="465" textLength="211.500" lengthAdjust="spacingAndGlyphs">Budget Amount</text>
<text x="2664" y="633.500" textLength="478.500" lengthAdjust="spacingAndGlyphs">Linked Pay Item (Revenue Override)</text>
<text x="3290.500" y="633.500" textLength="297.500" lengthAdjust="spacingAndGlyphs">Manual Forecast (EAC)</text>
<text x="2664" y="836" textLength="152" lengthAdjust="spacingAndGlyphs">Description</text>
</g>
<g fill="#fff" stroke="#e5e7eb" stroke-width="3">
<rect x="2665.500" y="487.500" width="596" height="87.500" rx="30"/>
<rect x="3291.500" y="487.500" width="596" height="87.500" rx="30"/>
<rect x="3291.500" y="656" width="596" height="87.500" rx="30"/>
<rect x="2665.500" y="859" width="1222" height="87.500" rx="30"/>
<rect x="2665.500" y="655.500" width="596" height="73.500" rx="7" stroke="#dcdfe4"/>
</g>
<g font-size="30" color="#111" class="s">
<text x="2691" y="543.500" textLength="113" lengthAdjust="spacingAndGlyphs">1001-02</text>
<text x="3318" y="543.500" textLength="158" lengthAdjust="spacingAndGlyphs">1871136.00</text>
<text x="2692" y="704" textLength="328" lengthAdjust="spacingAndGlyphs">-- Auto-match by Code --</text>
<text x="3317" y="712" textLength="56" lengthAdjust="spacingAndGlyphs">0.00</text>
<text x="2691" y="915" textLength="186" lengthAdjust="spacingAndGlyphs">Steel Erection</text>
</g>
<path d="M3235 688l9 11 9-11" fill="none" stroke="#222" stroke-width="1.800"/>
<text x="2664" y="778" font-size="23" textLength="336" lengthAdjust="spacingAndGlyphs" color="#64748b" class="s">System will auto-match if left at 0.</text>
<rect x="2664" y="984" width="1224" height="3" fill="#e5e7eb"/>
<rect x="3598.500" y="1015.500" width="288" height="73" rx="28" fill="#fff" stroke="#e5e7eb" stroke-width="3"/>
<text x="3622" y="1061" font-size="29" textLength="242" lengthAdjust="spacingAndGlyphs" class="b" color="#10182c">Delete Cost Code</text>

<rect x="2637.500" y="1158.500" width="1279" height="106" rx="34" fill="#f8fafc" stroke="#e5e7eb" stroke-width="3"/>
<path d="M2679 1206l9 9.500 9-9.500" fill="none" stroke="#000" stroke-width="3.200"/>
<rect x="2732.500" y="1196" width="30.500" height="31" rx="4" fill="#dcd6e2"/>
<rect x="2735" y="1203.500" width="6.500" height="23.500" rx="1" fill="#8fdc5e"/>
<rect x="2744.500" y="1212" width="6.500" height="15" rx="1" fill="#e8337a"/>
<rect x="2754" y="1200" width="6.500" height="27" rx="1" fill="#2f94ee"/>
<text x="2779" y="1222" font-size="32" textLength="481" lengthAdjust="spacingAndGlyphs" class="b" color="#64748b">Cost Code Analytics &amp; Drilldown</text>
<text x="3531" y="1221" font-size="26" textLength="353" lengthAdjust="spacingAndGlyphs" color="#64748b" class="s">Click to expand detailed analysis</text>

<!-- Quantities card -->
<path d="M2637.500 2300V1397a38 38 0 0 1 38-38H3879a38 38 0 0 1 38 38V2300" fill="#fff" stroke="#e5e7eb" stroke-width="4"/>
<rect x="2682.500" y="1409.500" width="31" height="31.500" rx="3.500" fill="#fff" stroke="#3b82f6" stroke-width="3"/>
<rect x="2690" y="1407" width="16" height="7" rx="1.500" fill="#3b82f6"/><rect x="2695" y="1404" width="6" height="5" rx="2" fill="#3b82f6"/>
<path d="M2691 1418l7 10 7-10" fill="none" stroke="#3b82f6" stroke-width="2.200"/>
<text x="2738" y="1437" font-size="34" textLength="323" lengthAdjust="spacingAndGlyphs" class="x" color="#10182c" style="stroke-width:1.500px">Quantities Installed</text>
<rect x="3644.500" y="1398.500" width="231" height="53" rx="11" fill="#eff6ff" stroke="#bfdbfe" stroke-width="3"/>
<text x="3672" y="1434" font-size="27" textLength="177" lengthAdjust="spacingAndGlyphs" class="b" color="#1e40af">Contract: 64.00</text>
<rect x="2675" y="1480" width="1203" height="3.500" fill="#f1f5f9"/>

<rect x="2678" y="1523" width="1198" height="538" rx="28" fill="url(#dash)" stroke="#cbd5e1" stroke-width="3" stroke-dasharray="7 4"/>
<path d="M2717 1562h13l7 7v16h-20z" fill="#e6dfeb"/><path d="M2720 1569h9M2720 1574h10M2720 1579h6" stroke="#b9aec4" stroke-width="1.500"/>
<path d="M2735 1565l4 3-9 16-6 2 1-6z" fill="#f4702d"/>
<text x="2753" y="1582" font-size="26" textLength="263" lengthAdjust="spacingAndGlyphs" class="b" color="#64748b">LOG NEW QUANTITY</text>
<g class="b" color="#64748b" font-size="23">
<text x="2710.500" y="1635" textLength="136" lengthAdjust="spacingAndGlyphs">WORK DATE</text>
<text x="3047" y="1635" textLength="119" lengthAdjust="spacingAndGlyphs">QUANTITY</text>
<text x="3340" y="1635" textLength="116" lengthAdjust="spacingAndGlyphs">LOCATION</text>
<text x="2710.500" y="1783" textLength="215.500" lengthAdjust="spacingAndGlyphs">WORK COMPLETED</text>
</g>
<g fill="#fff" stroke="#cbd5e1" stroke-width="3">
<rect x="2712.500" y="1652.500" width="310" height="81" rx="27"/>
<rect x="3050.500" y="1652.500" width="265" height="76" rx="27"/>
<rect x="3342.500" y="1652.500" width="496" height="76" rx="27"/>
<rect x="2712.500" y="1800" width="1126" height="131" rx="27"/>
</g>
<text x="2737" y="1704" font-size="27" textLength="174" lengthAdjust="spacingAndGlyphs" class="b" color="#10182c">mm/dd/yyyy</text>
<use href="#cal" x="2957" y="1680" width="21" height="25" color="#000"/>
<g class="b" color="#757575" font-size="27">
<text x="3072" y="1703" textLength="54" lengthAdjust="spacingAndGlyphs">0.00</text>
<text x="3365" y="1703" textLength="290" lengthAdjust="spacingAndGlyphs">Location A / Sta 12+00</text>
<text x="2734" y="1849" textLength="394" lengthAdjust="spacingAndGlyphs">Describe the work completed...</text>
</g>
<path d="M3822 1930l15-17M3830 1930l7-8" stroke="#555" stroke-width="1.800" fill="none"/>
<rect x="3462" y="1964" width="380" height="64" rx="28" fill="#10182c"/>
<path d="M3506.500 1995.500h18.500M3515.500 1986v19" stroke="#fff" stroke-width="2.600"/>
<text x="3559" y="2005" font-size="29" textLength="245" lengthAdjust="spacingAndGlyphs" class="b" color="#fff">Add Quantity Log</text>

<!-- dark list -->
<rect x="2676.500" y="2100" width="1199" height="200" fill="#fff" stroke="#d6dae0" stroke-width="2"/>
<path d="M2676 2189V2120a20 20 0 0 1 20-20H3856a20 20 0 0 1 20 20V2189z" fill="#1e293b"/>
<rect x="2676" y="2189" width="1200" height="4" fill="#475569"/>
<g class="b" color="#fff" font-size="27">
<text x="2708" y="2155" textLength="65" lengthAdjust="spacingAndGlyphs">DATE</text>
<text x="2919" y="2155" textLength="50" lengthAdjust="spacingAndGlyphs">QTY</text>
<text x="3033" y="2155" textLength="152" lengthAdjust="spacingAndGlyphs">REMAINING</text>
<text x="3249" y="2155" textLength="131" lengthAdjust="spacingAndGlyphs">LOCATION</text>
<text x="3443" y="2155" textLength="81" lengthAdjust="spacingAndGlyphs">WORK</text>
</g>
<text x="2709" y="2268" font-size="26" textLength="139" lengthAdjust="spacingAndGlyphs" class="b" color="#64748b">2026-02-09</text>
<text x="2915" y="2268" font-size="26" textLength="53" lengthAdjust="spacingAndGlyphs" class="b" color="#10182c">3.00</text>
<text x="3115" y="2268" font-size="26" textLength="70" lengthAdjust="spacingAndGlyphs" class="b" color="#22c55e">58.00</text>
<rect x="3767" y="2221" width="75" height="60" rx="26" fill="#fff" stroke="#e5e7eb" stroke-width="2"/>
<path d="M3796 2246h6v2h5v3h-16v-3h5z" fill="#475569"/>
</g>
</svg>
</body></html>
